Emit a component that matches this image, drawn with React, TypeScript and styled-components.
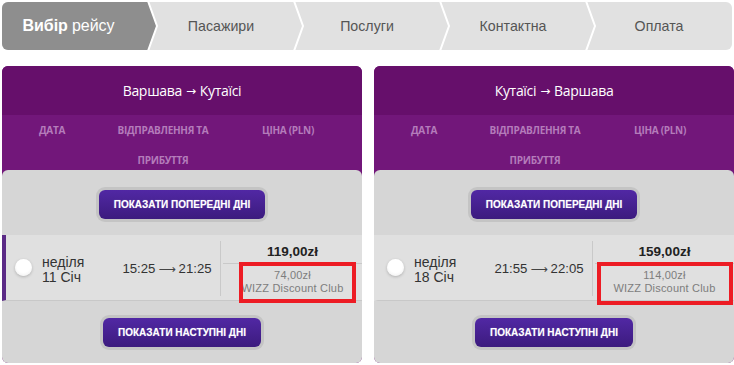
import styled, { createGlobalStyle } from "styled-components";

const GlobalStyle = createGlobalStyle`
  html, body {
    margin: 0;
    padding: 0;
    background: #ffffff;
  }
  body {
    font-family: "Liberation Sans", Arial, sans-serif;
  }
`;

const Page = styled.div`
  width: 734px;
  padding: 2px 0 0 2px;
  box-sizing: border-box;
`;

const Steps = styled.nav`
  display: flex;
  width: 730px;
  height: 48px;
  background: #e1e1e1;
  border-radius: 6px;
  overflow: hidden;
`;

const Step = styled.div<{ $active?: boolean }>`
  position: relative;
  flex: none;
  width: 146px;
  box-sizing: border-box;
  display: flex;
  align-items: center;
  justify-content: center;
  padding-right: ${(p) => (p.$active ? "13px" : "0")};
  background: ${(p) => (p.$active ? "#8e8e8e" : "transparent")};
  color: ${(p) => (p.$active ? "#ffffff" : "#555555")};
  font-size: ${(p) => (p.$active ? "16px" : "14.2px")};

  b {
    font-weight: bold;
    margin-right: 4px;
  }
`;

const Chevron = styled.svg`
  position: absolute;
  top: 0;
  left: 100%;
  margin-left: -1px;
  width: 12px;
  height: 48px;
  z-index: 2;
`;

const Panels = styled.div`
  display: flex;
  gap: 12px;
  margin-top: 16px;
`;

const Panel = styled.section`
  width: 360px;
  height: 297px;
  display: flex;
  flex-direction: column;
  background: #72177a;
  border-radius: 6px;
  overflow: hidden;
`;

const Title = styled.div`
  height: 49px;
  display: flex;
  align-items: center;
  justify-content: center;
  gap: 4px;
  background: #660f6b;
  color: #ffffff;
  font-family: "Open Sans", sans-serif;
  font-size: 14px;
  letter-spacing: -0.3px;
`;

const Heads = styled.div`
  height: 55px;
  display: grid;
  grid-template-columns: 100px 122px 1fr;
  padding-right: 10px;
  color: #b47cba;
  font-family: "Open Sans", sans-serif;
  font-weight: bold;
  font-size: 10px;
  letter-spacing: -0.3px;
  line-height: 30px;
  text-align: center;
  text-transform: uppercase;
`;

const Body = styled.div`
  flex: 1;
  display: flex;
  flex-direction: column;
  align-items: center;
  padding-top: 20px;
  background: #d6d6d6;
  border-radius: 6px 6px 0 0;
`;

const NavButton = styled.button`
  height: 29px;
  padding: 0 15px;
  border: none;
  border-radius: 6px;
  background: linear-gradient(#5128a4, #3c1b7e);
  box-shadow: 0 0 0 3px #c4c4c4;
  color: #ffffff;
  font-family: "Liberation Sans", Arial, sans-serif;
  font-weight: bold;
  font-size: 10px;
  text-transform: uppercase;
  text-shadow: 0 0 1px rgba(255, 255, 255, 0.4);
  cursor: pointer;
`;

const Row = styled.div<{ $selected?: boolean }>`
  align-self: stretch;
  height: 65px;
  margin: 16px 0 17px;
  display: grid;
  grid-template-columns: 104px 110px 1fr;
  background: #e0e0e0;
  border-left: 4px solid ${(p) => (p.$selected ? "#5b2a86" : "transparent")};
  border-bottom: 1px solid #c8c8c8;
  color: #333333;
  font-size: 13.2px;
`;

const DateCell = styled.div`
  display: flex;
  align-items: center;
`;

const Radio = styled.span`
  width: 17px;
  height: 17px;
  margin: 0 10px 0 9px;
  flex: none;
  border-radius: 50%;
  background: radial-gradient(circle at 50% 40%, #ffffff 50%, #ebebeb 100%);
  box-shadow: 0 1px 3px rgba(0, 0, 0, 0.22);
`;

const DateText = styled.div`
  font-size: 14px;
  line-height: 15px;
  padding-top: 5px;
`;

const TimeCell = styled.div`
  display: flex;
  align-items: center;
  justify-content: center;
  gap: 3px;
  padding-top: 2px;
  padding-left: 4px;
`;

const Arrow = styled.span`
  font-family: "DejaVu Sans", sans-serif;
  font-size: 12px;
  color: #444444;
`;

const TitleArrow = styled.span`
  font-family: "DejaVu Sans", sans-serif;
  font-size: 12px;
`;

const PriceCell = styled.div`
  position: relative;
  margin: 6px 0 4px;
  padding-left: 2px;
  border-left: 1px solid #c9c9c9;
  text-align: center;
`;

const Price = styled.div`
  font-weight: bold;
  font-size: 13.5px;
  line-height: 22px;
  color: #222222;
`;

const Rule = styled.div`
  height: 1px;
  background: #c9c9c9;
`;

const Discount = styled.div`
  padding-top: 5px;
  font-size: 11px;
  letter-spacing: 0.2px;
  line-height: 13px;
  color: #7d7d7d;
`;

const Mark = styled.span<{ $left: number; $right: number; $bottom: number }>`
  position: absolute;
  top: 21px;
  left: ${(p) => p.$left}px;
  right: ${(p) => p.$right}px;
  bottom: ${(p) => p.$bottom}px;
  border: 4px solid #ed1c24;
`;

const steps = ["Вибір рейсу", "Пасажири", "Послуги", "Контактна", "Оплата"];

type Flight = {
  from: string;
  to: string;
  day: string;
  date: string;
  dep: string;
  arr: string;
  price: string;
  club: string;
  selected: boolean;
  mark: { left: number; right: number; bottom: number };
};

const flights: Flight[] = [
  {
    from: "Варшава",
    to: "Кутаїсі",
    day: "неділя",
    date: "11 Січ",
    dep: "15:25",
    arr: "21:25",
    price: "119,00zł",
    club: "74,00zł",
    selected: true,
    mark: { left: 18, right: 6, bottom: -7 },
  },
  {
    from: "Кутаїсі",
    to: "Варшава",
    day: "неділя",
    date: "18 Січ",
    dep: "21:55",
    arr: "22:05",
    price: "159,00zł",
    club: "114,00zł",
    selected: false,
    mark: { left: 4, right: 1, bottom: -9 },
  },
];

export default function App() {
  return (
    <Page>
      <GlobalStyle />
      <Steps>
        {steps.map((s, i) => (
          <Step key={s} $active={i === 0}>
            {i === 0 ? (
              <span>
                <b>Вибір</b>рейсу
              </span>
            ) : (
              s
            )}
            {i < steps.length - 1 && (
              <Chevron viewBox="0 0 12 48">
                {i === 0 && <polygon points="0,0 1,0 10,24 1,48 0,48" fill="#8e8e8e" />}
                <polyline points="1,-1 10,24 1,49" fill="none" stroke="#ffffff" strokeWidth="2" />
              </Chevron>
            )}
          </Step>
        ))}
      </Steps>

      <Panels>
        {flights.map((f) => (
          <Panel key={f.from}>
            <Title>
              {f.from}
              <TitleArrow>→</TitleArrow>
              {f.to}
            </Title>
            <Heads>
              <div>Дата</div>
              <div>Відправлення та прибуття</div>
              <div>Ціна (PLN)</div>
            </Heads>
            <Body>
              <NavButton>Показати попередні дні</NavButton>
              <Row $selected={f.selected}>
                <DateCell>
                  <Radio />
                  <DateText>
                    {f.day}
                    <br />
                    {f.date}
                  </DateText>
                </DateCell>
                <TimeCell>
                  {f.dep}
                  <Arrow>⟶</Arrow>
                  {f.arr}
                </TimeCell>
                <PriceCell>
                  <Price>{f.price}</Price>
                  <Rule />
                  <Discount>
                    {f.club}
                    <br />
                    WIZZ Discount Club
                  </Discount>
                  <Mark $left={f.mark.left} $right={f.mark.right} $bottom={f.mark.bottom} />
                </PriceCell>
              </Row>
              <NavButton>Показати наступні дні</NavButton>
            </Body>
          </Panel>
        ))}
      </Panels>
    </Page>
  );
}
